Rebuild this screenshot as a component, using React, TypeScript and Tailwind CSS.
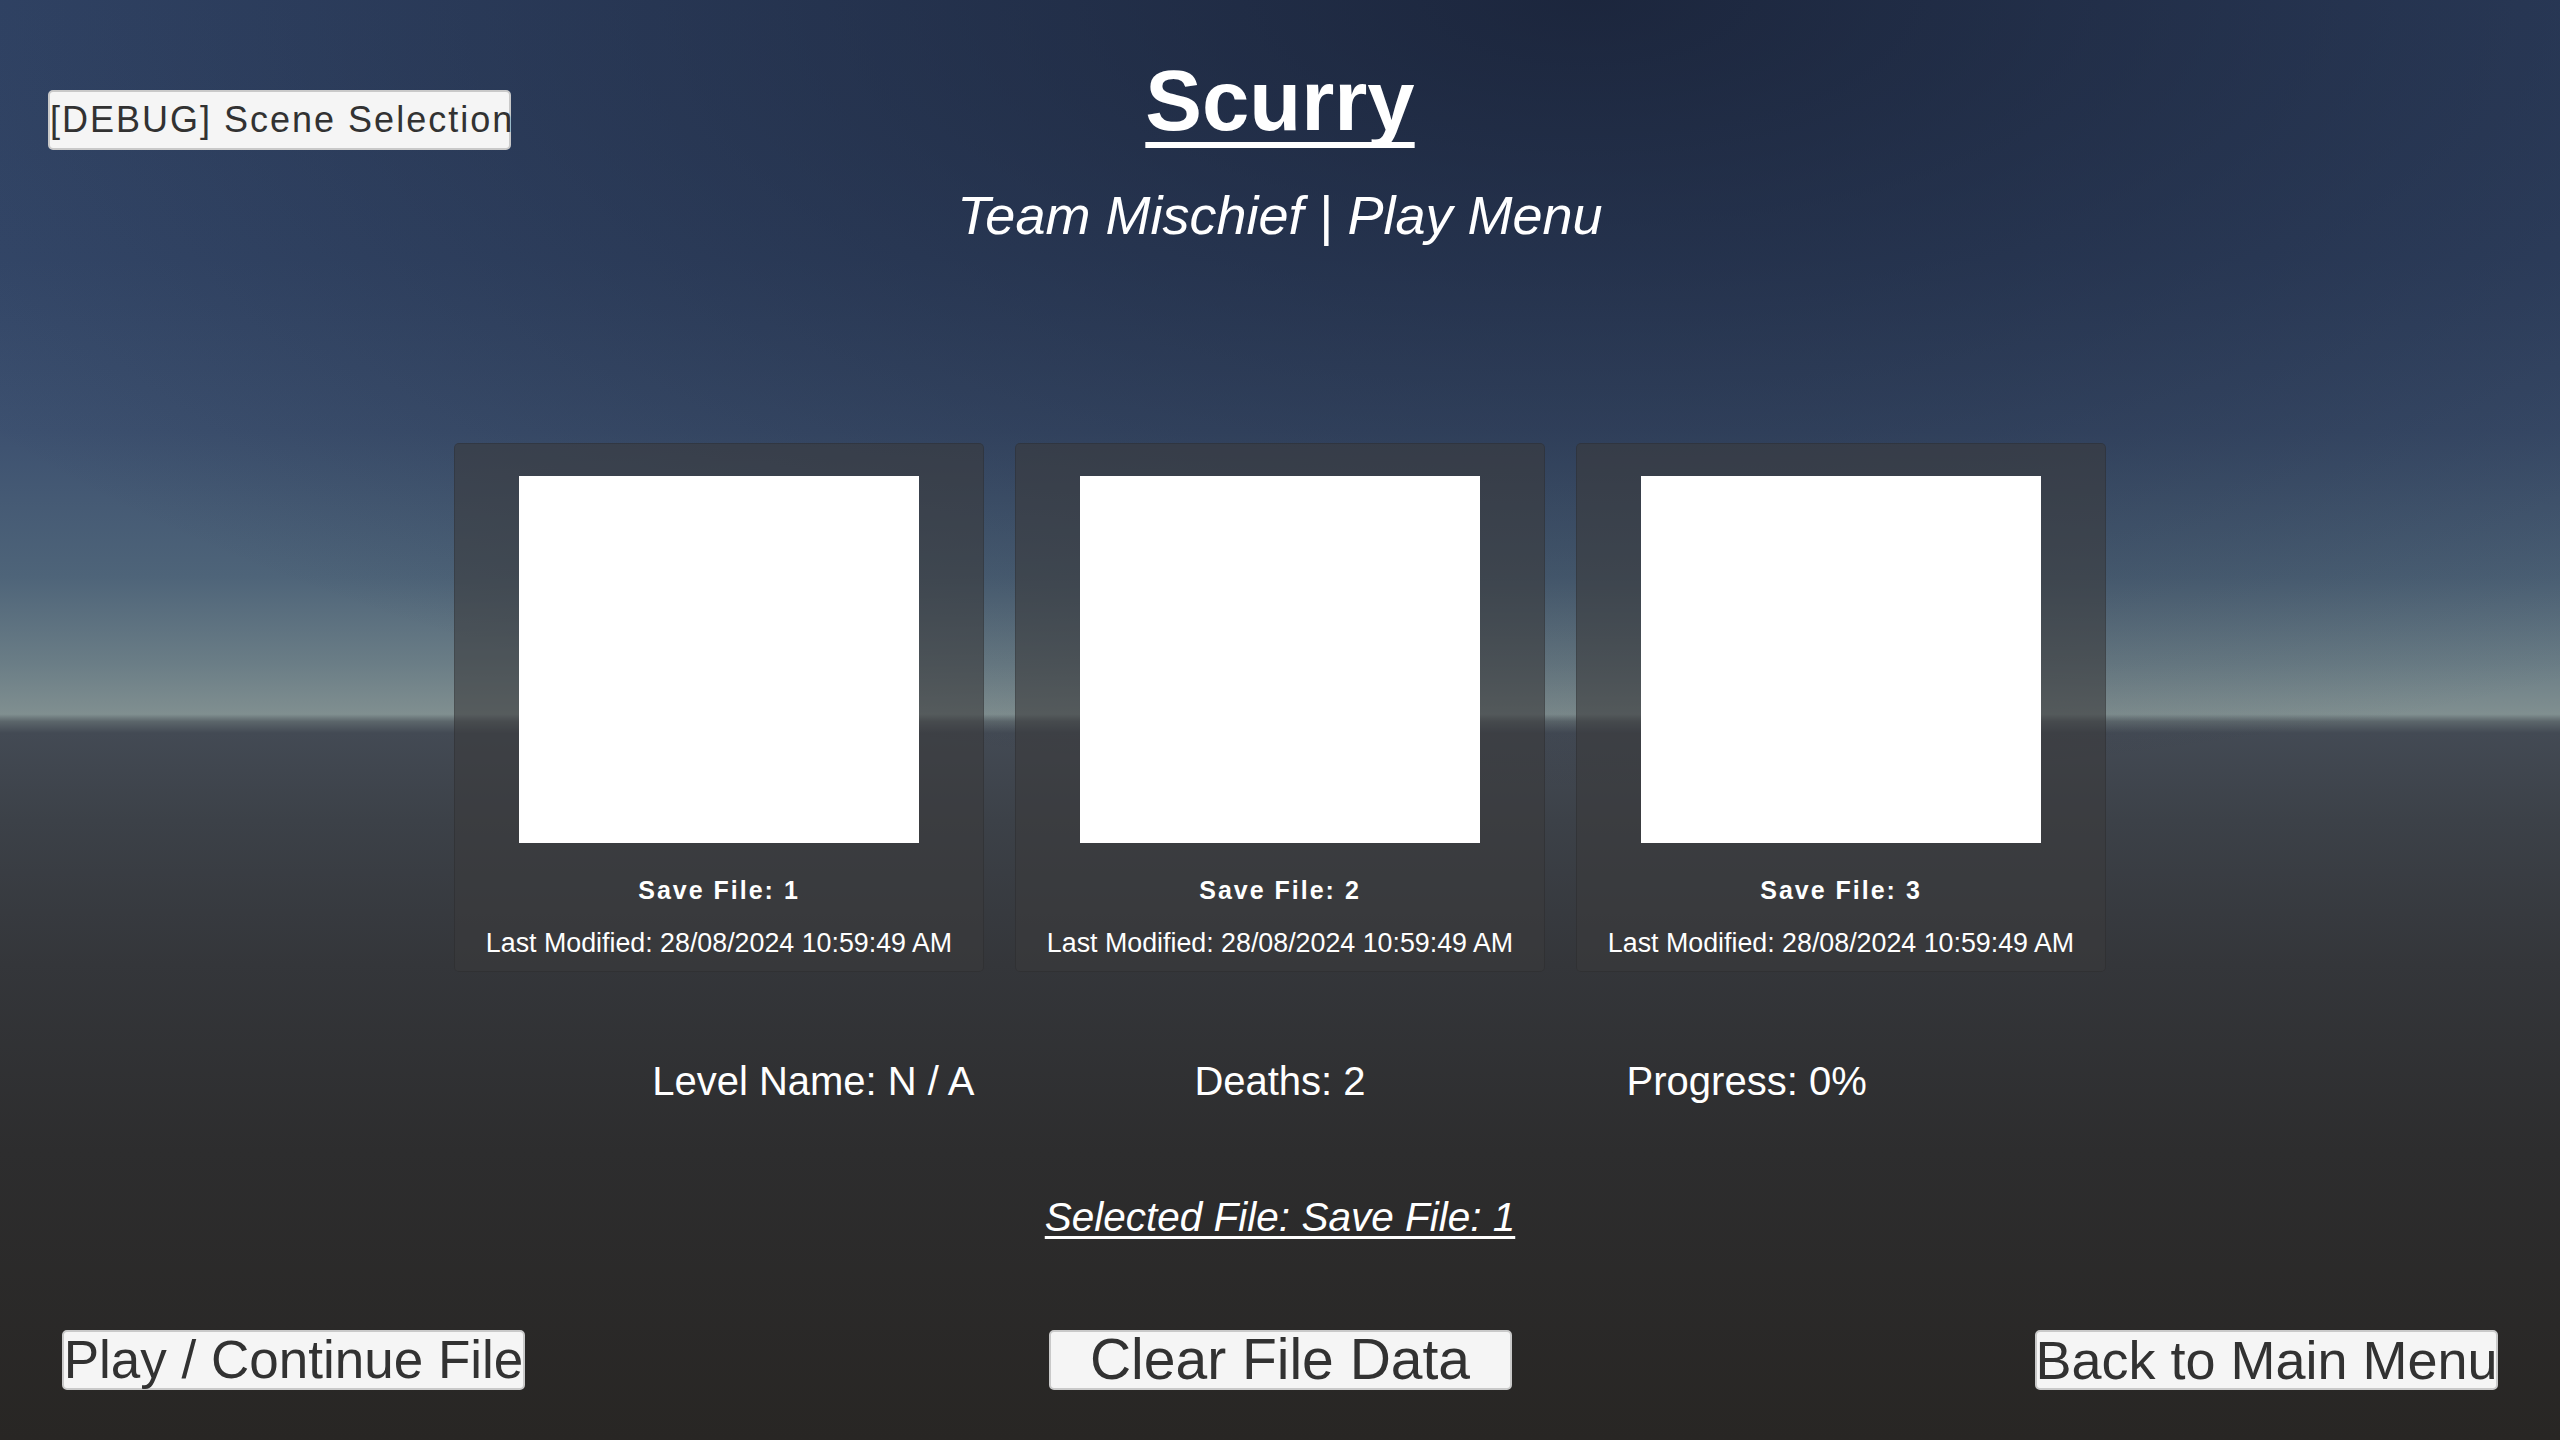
import React from "react";

const font = { fontFamily: '"Liberation Sans", Arial, sans-serif' };

function SaveCard({ n }: { n: number }) {
  return (
    <div className="flex h-[529px] w-[530px] flex-col items-center rounded-[5px] border border-[rgba(0,0,0,0.12)] bg-[rgba(58,58,60,0.6)] pt-[32px]">
      <div className="h-[367px] w-[400px] bg-white" />
      <div className="mt-[35px] text-[25px] font-bold leading-none tracking-[2px] text-white">
        Save File: {n}
      </div>
      <div className="mt-[27px] whitespace-nowrap text-[26.8px] leading-none text-white">
        Last Modified: 28/08/2024 10:59:49 AM
      </div>
    </div>
  );
}

function MenuButton({ label, size }: { label: string; size: string }) {
  return (
    <button
      className={`flex h-[60px] w-[463px] items-center justify-center overflow-visible whitespace-nowrap rounded-[5px] border-2 border-[#c9c9c9] bg-[#f5f5f5] leading-none text-[#323232] ${size}`}
    >
      {label}
    </button>
  );
}

export default function App() {
  return (
    <div
      style={font}
      className="flex h-[1440px] w-full flex-col overflow-hidden bg-[radial-gradient(ellipse_75%_55%_at_62%_0%,rgba(20,27,46,0.75),rgba(20,27,46,0)_100%),linear-gradient(to_bottom,#33476a_0%,#35496b_18%,#3d5170_30%,#4e6479_40%,#6a7d86_46%,#808f90_49.6%,#5c666b_50.1%,#434a54_50.9%,#3c4148_57%,#34363a_67%,#2d2d2e_80%,#282624_100%)]"
    >
      {/* header */}
      <div className="grid grid-cols-[1fr_auto_1fr] items-start">
        <div className="pl-[48px] pt-[90px]">
          <button className="flex h-[60px] w-[463px] items-center overflow-visible whitespace-nowrap rounded-[5px] border-2 border-[#c9c9c9] bg-[#f5f5f5] text-[36px] leading-none tracking-[2px] text-[#323232]">
            [DEBUG] Scene Selection
          </button>
        </div>
        <h1 className="pt-[58px] text-[85px] font-bold leading-none text-white underline decoration-[6px] underline-offset-[12px] [text-decoration-skip-ink:none]">
          Scurry
        </h1>
        <div />
      </div>
      <div className="mt-[38px] text-center text-[54px] italic leading-none text-white">
        Team Mischief | Play Menu
      </div>

      {/* save cards */}
      <div className="mt-[201px] flex justify-center gap-[31px]">
        <SaveCard n={1} />
        <SaveCard n={2} />
        <SaveCard n={3} />
      </div>

      {/* stats */}
      <div className="mx-auto mt-[89px] grid w-[1400px] grid-cols-3 text-center text-[40px] leading-none text-white">
        <div>Level Name: N / A</div>
        <div>Deaths: 2</div>
        <div>Progress: 0%</div>
      </div>

      <div className="mt-[96px] text-center text-[40.5px] italic leading-none text-white underline decoration-[3px] underline-offset-[5px]">
        Selected File: Save File: 1
      </div>

      {/* buttons */}
      <div className="mt-[92px] flex justify-between px-[62px]">
        <MenuButton label="Play / Continue File" size="text-[53px]" />
        <MenuButton label="Clear File Data" size="text-[57px]" />
        <MenuButton label="Back to Main Menu" size="text-[54px]" />
      </div>
    </div>
  );
}
